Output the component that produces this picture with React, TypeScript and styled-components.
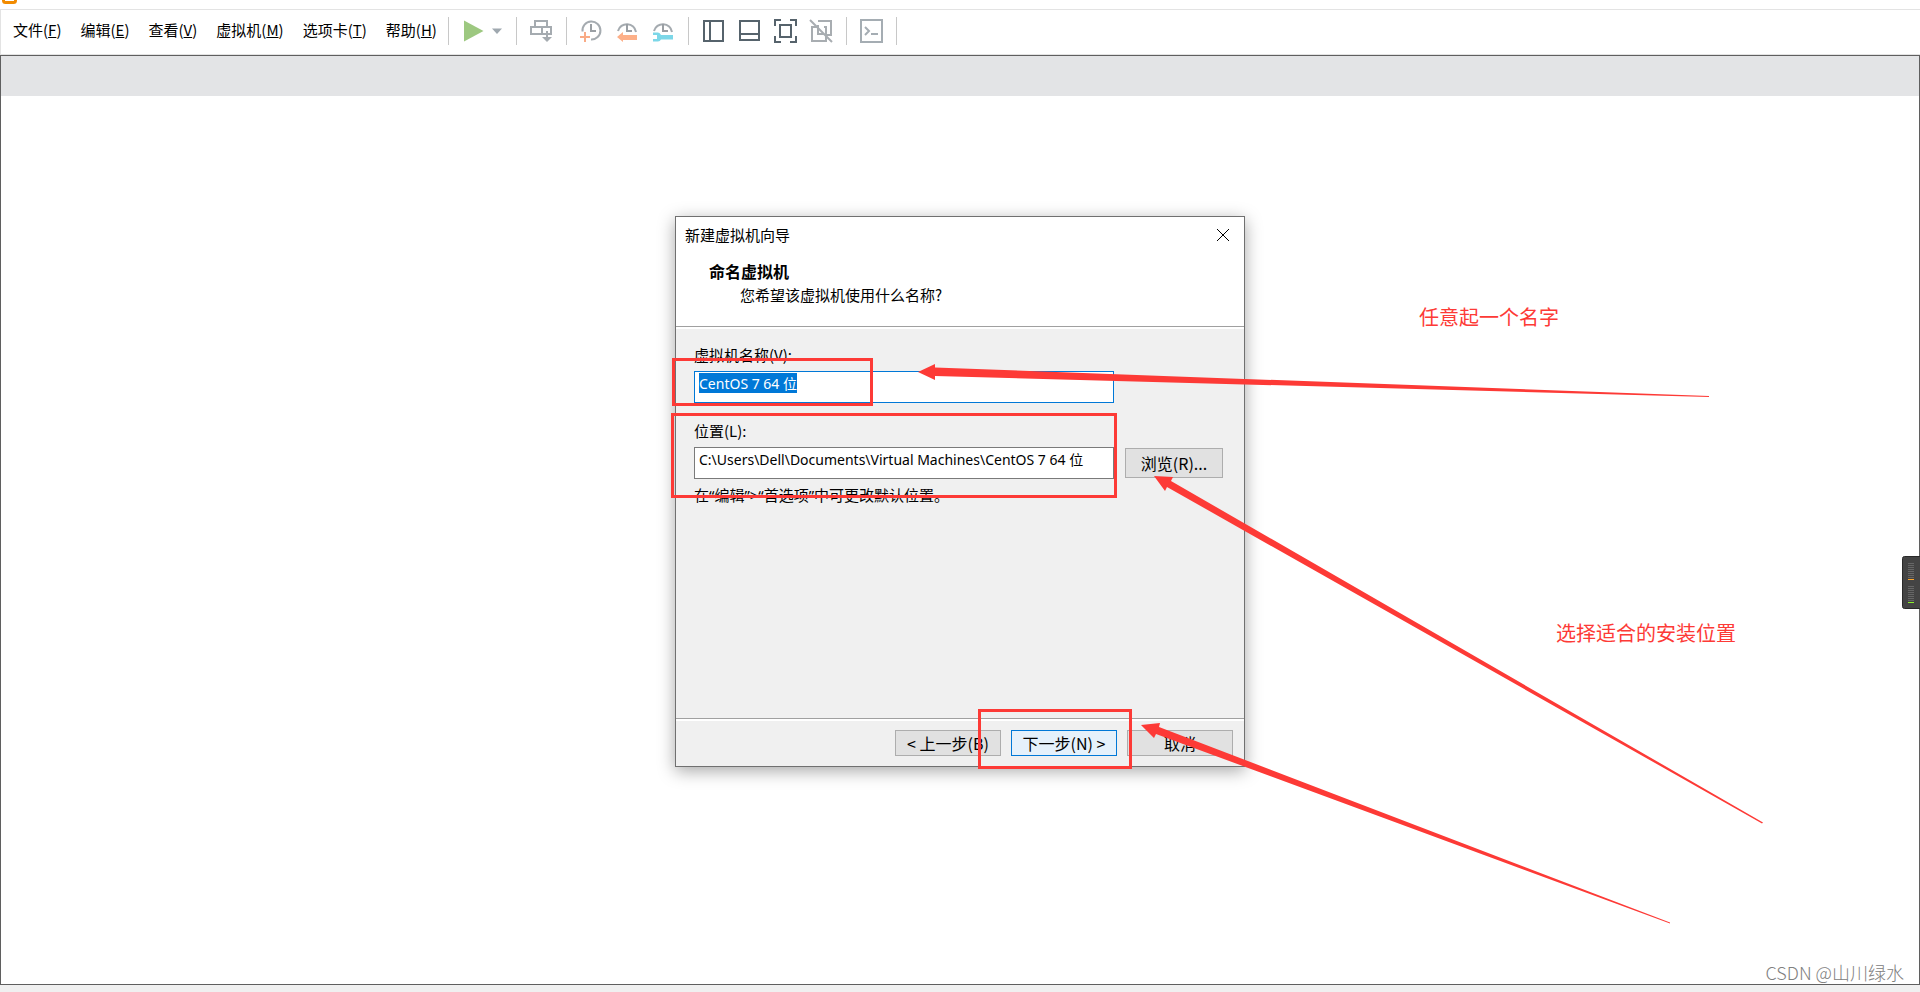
import React, { useEffect, useRef } from "react";
import styled, { createGlobalStyle } from "styled-components";

const GlobalStyle = createGlobalStyle`
  * { box-sizing: border-box; }
  body {
    margin: 0;
    background: #f0f0f0;
    color: #000;
    font-family: "Noto Sans CJK SC", sans-serif;
    font-size: 15px;
  }
  button, input { font: inherit; color: inherit; margin: 0; }
`;

const RED = "#fd3a36";

const Window = styled.div`
  display: flex;
  flex-direction: column;
  min-height: 100vh;
  padding-bottom: 7px;
  overflow: hidden;
  position: relative;
`;

const TitleBar = styled.header`
  height: 9px;
  padding-left: 2px;
  overflow: hidden;
  background: #fff;
`;

const AppLogo = styled.svg`
  display: block;
  width: 15px;
  height: 4px;
`;

const CommandBar = styled.div`
  display: flex;
  align-items: center;
  height: 46px;
  padding-bottom: 3px;
  background: #fff;
  border: 1px solid #e3e3e3;
  border-right: 0;
`;

const MenuBar = styled.nav`
  display: flex;
  gap: 19px;
  padding: 0 11px 2px 12px;
`;

const MenuButton = styled.button`
  padding: 0;
  border: 0;
  background: none;
  line-height: 20px;
  white-space: nowrap;
`;

const ToolGroup = styled.div<{ $gap?: number }>`
  display: flex;
  align-items: center;
  gap: ${(p) => p.$gap ?? 12}px;
  height: 28px;
  padding: 0 13px 0 12px;
  border-left: 1px solid #c8c8c8;
`;

const ToolButton = styled.button<{ $width?: number }>`
  width: ${(p) => p.$width ?? 24}px;
  height: 24px;
  padding: 0;
  border: 0;
  background: none;
`;

const Icon = styled.svg`
  display: block;
  width: 100%;
  height: 24px;
  fill: none;
`;

const Workspace = styled.main`
  flex: 1;
  display: flex;
  flex-direction: column;
  background: #fff;
  border: 1px solid #5f5f5f;
`;

const TabStrip = styled.div`
  height: 40px;
  background: #e3e4e6;
`;

const Stage = styled.div`
  display: flex;
  justify-content: center;
  padding-top: 120px;
`;

const DialogFrame = styled.div`
  position: relative;
  width: 570px;
`;

const Dialog = styled.section`
  display: flex;
  flex-direction: column;
  min-height: 551px;
  background: #f0f0f0;
  border: 1px solid #707070;
  box-shadow: 0 4px 16px rgba(0, 0, 0, 0.35);
`;

const DialogHead = styled.div`
  height: 110px;
  background: #fff;
  border-bottom: 1px solid #a0a0a0;
`;

const DialogTitle = styled.div`
  display: flex;
  align-items: center;
  justify-content: space-between;
  height: 36px;
  padding: 0 14px 0 9px;
  line-height: 20px;
`;

const CloseButton = styled.button`
  width: 14px;
  height: 14px;
  padding: 0;
  border: 0;
  background: none;
`;

const Heading = styled.h1`
  margin: 6px 0 0 33px;
  font-size: 16px;
  line-height: 24px;
`;

const Subheading = styled.p`
  margin: 0 0 0 64px;
  line-height: 24px;
`;

const Form = styled.form`
  flex: 1;
  display: flex;
  flex-direction: column;
  border-top: 2px solid #fff;
`;

const Fields = styled.div`
  flex: 1;
  padding: 16px 18px;
`;

const Label = styled.label`
  display: block;
  height: 26px;
  line-height: 20px;
`;

const FieldRow = styled.div`
  display: flex;
  align-items: center;
  gap: 11px;
  margin-bottom: 18px;
`;

const TextInput = styled.input`
  width: 420px;
  height: 32px;
  padding: 2px 4px 10px;
  border: 1px solid #7a7a7a;
  border-radius: 0;
  outline: 0;
  background: #fff;
  font-family: "Noto Sans", "Noto Sans CJK SC", sans-serif;
  font-size: 14px;
  line-height: 18px;

  &:focus { border-color: #0078d7; }
  &::selection { background: #0078d7; color: #fff; }
`;

const Hint = styled.p`
  margin: -13px 0 0;
  font-family: "Noto Sans", "Noto Sans CJK SC", sans-serif;
  line-height: 22px;
`;

const DialogFooter = styled.div`
  display: flex;
  justify-content: flex-end;
  gap: 10px;
  padding: 11px 11px 10px;
  border-top: 1px solid #a0a0a0;
  box-shadow: inset 0 2px #fff;
`;

const PushButton = styled.button<{ $width: number; $height: number; $primary?: boolean }>`
  width: ${(p) => p.$width}px;
  height: ${(p) => p.$height}px;
  padding: 0;
  border: 1px solid ${(p) => (p.$primary ? "#0078d7" : "#adadad")};
  background: ${(p) => (p.$primary ? "#e5f1fb" : "#e1e1e1")};
  font-size: 16px;
  line-height: 22px;
  white-space: nowrap;
`;

const Markup = styled.svg`
  position: absolute;
  left: 0;
  top: 0;
  width: 100%;
  height: 100%;
  overflow: visible;
  pointer-events: none;
`;

const Note = styled.p<{ $x: number; $y: number }>`
  position: absolute;
  left: ${(p) => p.$x}px;
  top: ${(p) => p.$y}px;
  margin: 0;
  color: ${RED};
  font-size: 20px;
  line-height: 28px;
  white-space: nowrap;
`;

const Meter = styled.svg`
  position: absolute;
  right: 0;
  top: 556px;
  width: 18px;
  height: 53px;
`;

const Watermark = styled.footer`
  position: absolute;
  right: 16px;
  bottom: 7px;
  color: #808080;
  font-size: 18px;
  font-weight: 300;
  line-height: 26px;
`;

const menus = [
  ["文件", "F"],
  ["编辑", "E"],
  ["查看", "V"],
  ["虚拟机", "M"],
  ["选项卡", "T"],
  ["帮助", "H"],
];

const Clock = ({ d }: { d: string }) => (
  <>
    <path d={d} stroke="#a5abb0" strokeWidth="2" />
    <path d="M12 5v7h5" stroke="#9a9fa4" strokeWidth="2" />
  </>
);

const bars = [0, 1, 2, 3, 4, 5, 6, 7];

export default function App() {
  const nameRef = useRef<HTMLInputElement>(null);
  useEffect(() => {
    nameRef.current?.focus();
    nameRef.current?.select();
  }, []);

  return (
    <Window>
      <GlobalStyle />
      <TitleBar>
        <AppLogo viewBox="0 0 15 4">
          <path d="M1.5 0v.5q0 2 2 2h8q2 0 2-2V0" fill="none" stroke="#f28b00" strokeWidth="3" />
        </AppLogo>
      </TitleBar>
      <CommandBar>
        <MenuBar>
          {menus.map(([name, key]) => (
            <MenuButton key={key}>
              {name}(<u>{key}</u>)
            </MenuButton>
          ))}
        </MenuBar>
        <ToolGroup $gap={6}>
          <ToolButton aria-label="启动">
            <Icon viewBox="0 0 24 24">
              <path d="M3 1.500v21L22.500 12z" fill="#9dc880" />
            </Icon>
          </ToolButton>
          <ToolButton $width={12} aria-label="电源选项">
            <Icon viewBox="0 0 12 24">
              <path d="M1 9.500h10L6 15z" fill="#9fa8af" />
            </Icon>
          </ToolButton>
        </ToolGroup>
        <ToolGroup>
          <ToolButton aria-label="发送">
            <Icon viewBox="0 0 24 24" stroke="#a5abb0" strokeWidth="2">
              <path d="M6 8V2h12v6M2 8h20v7H2zM13 8v7M18 12v7" />
              <path d="M13 18h10l-5 5z" fill="#a5abb0" stroke="none" />
            </Icon>
          </ToolButton>
        </ToolGroup>
        <ToolGroup>
          <ToolButton aria-label="拍摄快照">
            <Icon viewBox="0 0 24 24">
              <Clock d="M3.500 12.500A9 9 0 1 1 12 20.500" />
              <path d="M6 13v10M1 18h10" stroke="#f9ab86" strokeWidth="2" />
            </Icon>
          </ToolButton>
          <ToolButton aria-label="恢复快照">
            <Icon viewBox="0 0 24 24">
              <Clock d="M3 12A9.200 9.200 0 0 1 21 13" />
              <path d="M2 18l6-5v3h14v5H8v2z" fill="#fdb089" />
            </Icon>
          </ToolButton>
          <ToolButton aria-label="管理快照">
            <Icon viewBox="0 0 24 24">
              <Clock d="M3 12A9.200 9.200 0 0 1 21 13" />
              <path d="M2 13.500h5q2 0 3 2.500h12v4.500H10q-1 2-3 2H2v-2.500h4v-4H2z" fill="#7cd7e8" />
            </Icon>
          </ToolButton>
        </ToolGroup>
        <ToolGroup>
          <ToolButton aria-label="显示库">
            <Icon viewBox="0 0 24 24" stroke="#56636c" strokeWidth="2">
              <path d="M3 2h19v20H3zM9 2v20" />
            </Icon>
          </ToolButton>
          <ToolButton aria-label="显示缩略图">
            <Icon viewBox="0 0 24 24" stroke="#56636c" strokeWidth="2">
              <path d="M3 2h19v19H3zM3 15h19" />
            </Icon>
          </ToolButton>
          <ToolButton aria-label="全屏">
            <Icon viewBox="0 0 24 24" stroke="#56636c" strokeWidth="2">
              <path d="M2 7V1h6M17 1h6v6M23 17v6h-6M8 23H2v-6M7 6h11v12H7z" />
            </Icon>
          </ToolButton>
          <ToolButton aria-label="Unity">
            <Icon viewBox="0 0 24 24" stroke="#a8adb1" strokeWidth="2">
              <path d="M9 2h13v14h-5M15 8h2v14H3V8h5M9 6v9h6M1 1l22 22" />
            </Icon>
          </ToolButton>
        </ToolGroup>
        <ToolGroup>
          <ToolButton aria-label="控制台视图">
            <Icon viewBox="0 0 24 24" stroke="#a5adb3" strokeWidth="2">
              <path d="M2 1h21v22H2zM6 8l4 4-4 4M12 15h7" />
            </Icon>
          </ToolButton>
        </ToolGroup>
        <ToolGroup />
      </CommandBar>
      <Workspace>
        <TabStrip />
        <Stage>
          <DialogFrame>
            <Dialog role="dialog" aria-labelledby="wizard-title">
              <DialogHead>
                <DialogTitle>
                  <span id="wizard-title">新建虚拟机向导</span>
                  <CloseButton aria-label="关闭">
                    <svg width="14" height="14" viewBox="0 0 14 14" display="block">
                      <path d="M1 1l12 12M13 1L1 13" stroke="#000" />
                    </svg>
                  </CloseButton>
                </DialogTitle>
                <Heading>命名虚拟机</Heading>
                <Subheading>您希望该虚拟机使用什么名称?</Subheading>
              </DialogHead>
              <Form onSubmit={(e) => e.preventDefault()}>
                <Fields>
                  <Label htmlFor="vm-name">虚拟机名称(V):</Label>
                  <FieldRow>
                    <TextInput id="vm-name" ref={nameRef} defaultValue="CentOS 7 64 位" />
                  </FieldRow>
                  <Label htmlFor="vm-location">位置(L):</Label>
                  <FieldRow>
                    <TextInput
                      id="vm-location"
                      defaultValue={"C:\\Users\\Dell\\Documents\\Virtual Machines\\CentOS 7 64 位"}
                    />
                    <PushButton type="button" $width={98} $height={30}>
                      浏览(R)...
                    </PushButton>
                  </FieldRow>
                  <Hint>在“编辑”&gt;“首选项”中可更改默认位置。</Hint>
                </Fields>
                <DialogFooter>
                  <PushButton type="button" $width={106} $height={26}>
                    &lt; 上一步(B)
                  </PushButton>
                  <PushButton type="submit" $width={106} $height={26} $primary>
                    下一步(N) &gt;
                  </PushButton>
                  <PushButton type="button" $width={106} $height={26}>
                    取消
                  </PushButton>
                </DialogFooter>
              </Form>
            </Dialog>
            <Markup fill="none" stroke={RED} strokeWidth="3">
              <rect x="-1.500" y="143.500" width="198" height="45" />
              <rect x="-2.500" y="198.500" width="443" height="82" />
              <rect x="304.500" y="494.500" width="151" height="57" />
              <g fill={RED} stroke="none">
                <path d="M243 156L260 148V151.500L1034 180V181L260 160V164z" />
                <path d="M479 260L498 261L496 265L1088 606.500L1087 607.500L492 271L490 275z" />
                <path d="M466 509L485 507L484 511L995 706.500V707.500L481 518L479 522z" />
              </g>
            </Markup>
            <Note $x={744} $y={87}>任意起一个名字</Note>
            <Note $x={881} $y={403}>选择适合的安装位置</Note>
          </DialogFrame>
        </Stage>
      </Workspace>
      <Meter viewBox="0 0 18 53">
        <rect x=".5" y=".5" width="22" height="52" rx="2" fill="#444" stroke="#292929" />
        {bars.map((i) => (
          <React.Fragment key={i}>
            <rect x="6" y={7 + i * 2} width="6" height="1" fill="#666" />
            <rect x="6" y={30 + i * 2} width="6" height="1" fill="#666" />
          </React.Fragment>
        ))}
        <rect x="6" y="23" width="6" height="1" fill="#ffa62b" />
        <rect x="6" y="46" width="6" height="1" fill="#8bf02a" />
      </Meter>
      <Watermark>CSDN @山川绿水</Watermark>
    </Window>
  );
}
